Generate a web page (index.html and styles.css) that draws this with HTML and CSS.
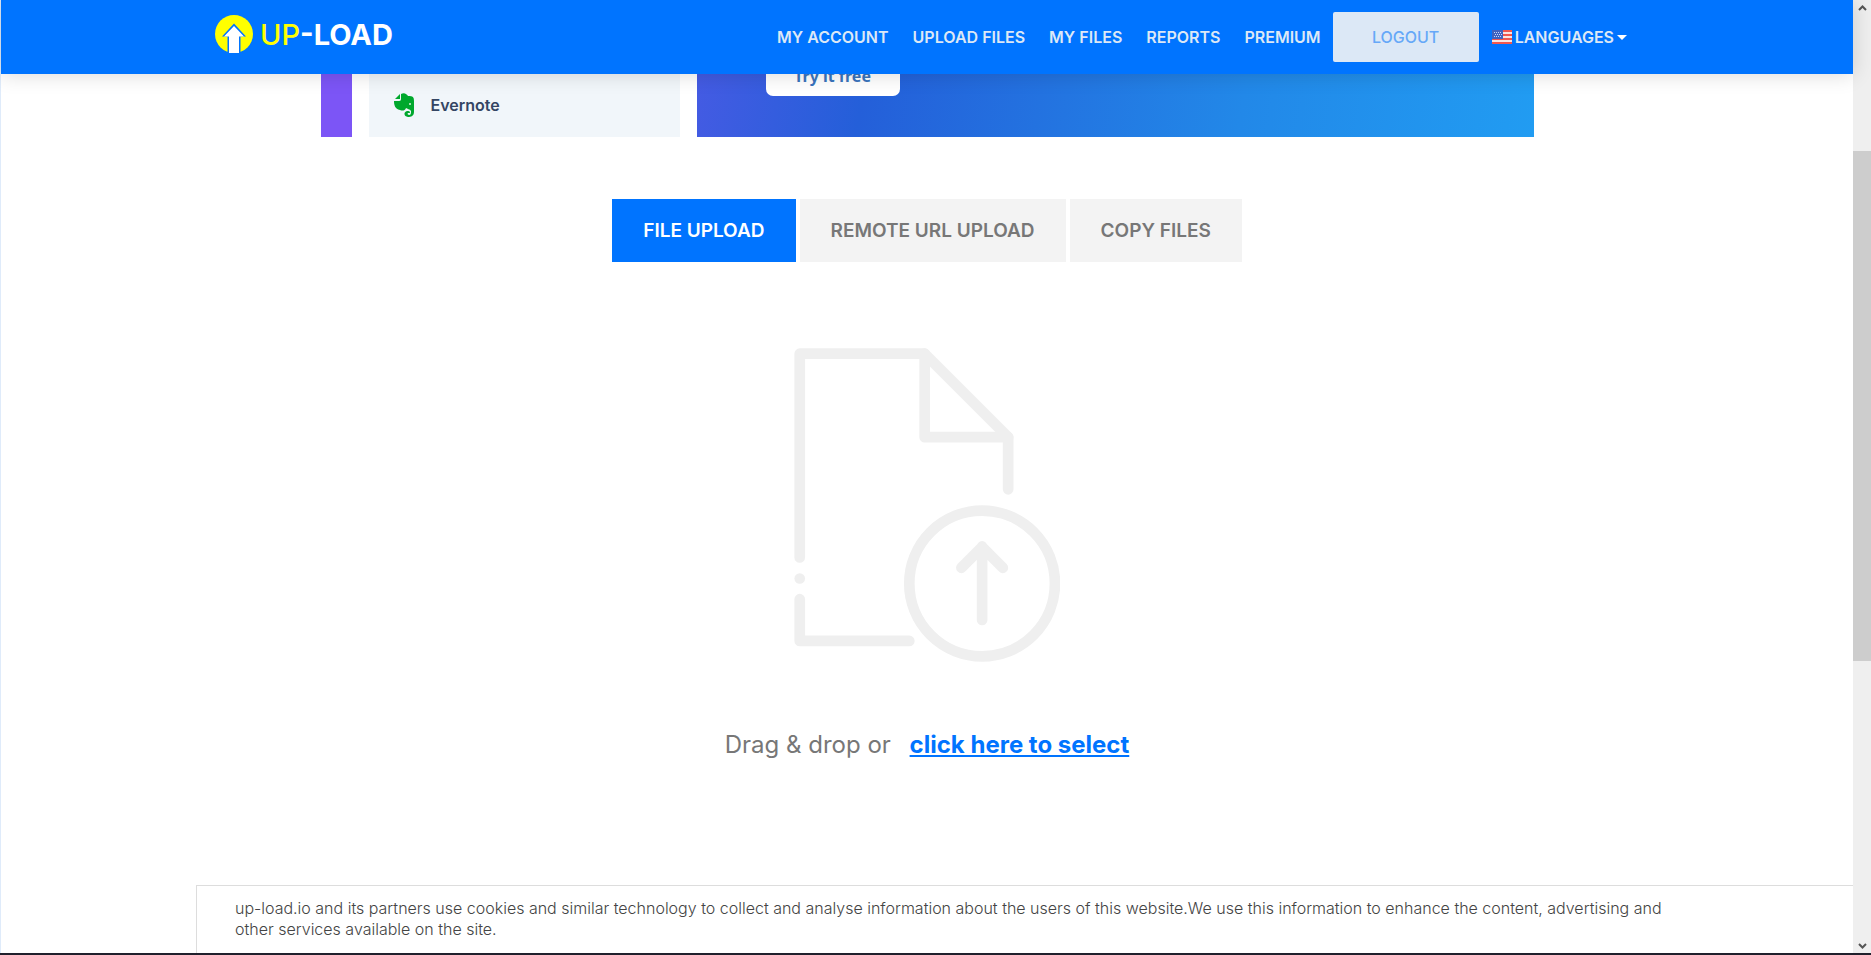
FILE: index.html
```html
<!DOCTYPE html>
<html lang="en">
<head>
  <meta charset="UTF-8" />
  <title>UP-LOAD</title>
  <link rel="stylesheet" href="styles.css">
</head>
<body>

  <div class="window">
    <div class="page">

      <header>
        <div class="container">
          <a href="#" class="logo">
            <svg width="38" height="38" viewBox="0 0 38 38">
              <circle cx="19" cy="19" r="19" fill="#ffff00" />
              <path d="M19 8.500 7 21.500h5.500V38h13V21.500H31z" fill="#0074ff" />
              <path d="M19 11 9 21.500H14v16.500h10V21.500h5z" fill="#fff" />
            </svg>
            <span><i>UP</i>-LOAD</span>
          </a>

          <nav>
            <a href="#">MY ACCOUNT</a>
            <a href="#">UPLOAD FILES</a>
            <a href="#">MY FILES</a>
            <a href="#">REPORTS</a>
            <a href="#">PREMIUM</a>
            <a href="#" class="logout">LOGOUT</a>
            <button type="button" class="languages">
              <svg width="20" height="14" viewBox="0 0 20 14">
                <rect width="20" height="14" fill="#f9e4e0" />
                <path d="M0 1h20M0 5h20M0 9h20M0 13h20" stroke="#f0574f" stroke-width="2" />
                <rect width="11" height="9" fill="#3f62bf" />
                <path d="M2 2.500h8M3 4.500h7M2 6.500h8" stroke="#c9d6f5" stroke-dasharray="1 1" />
              </svg>
              LANGUAGES
              <span class="caret"></span>
            </button>
          </nav>
        </div>
      </header>

      <main>
        <div class="banner">
          <div class="purple"></div>
          <div class="apps">
            <svg width="21" height="24" viewBox="0 0 21 24">
              <path d="M6 1v5H1zM7 1c3-2 6 0 7 2 5 0 6 1 6 5v11c0 4-3 5-6 5-4 0-5-5-1-6 2 0 3 0 3 2h-2c-1 1 0 2 1 2 2 0 2-2 2-4-1-2-4-2-5-3-1 3-4 3-6 2-5-1-6-5-6-9h5c2 0 2-1 2-3z" fill="#00a82d" />
              <circle cx="16" cy="11" r="1" fill="#d8f0de" />
            </svg>
            <span>Evernote</span>
          </div>
          <div class="offer">
            <a href="#">Try it free</a>
          </div>
        </div>

        <div class="tabs">
          <button type="button" class="active">FILE UPLOAD</button>
          <button type="button">REMOTE URL UPLOAD</button>
          <button type="button">COPY FILES</button>
        </div>

        <div class="drop">
          <svg width="266" height="314" viewBox="42 56 796 940">
            <g fill="none" stroke="#efefef" stroke-width="32" stroke-linecap="round" stroke-linejoin="round">
              <path d="M59 683V73H433L683 323V479" />
              <path d="M433 73V323H683" />
              <path d="M59 808V933H387" />
              <path d="M59 746h0" />
              <circle cx="605" cy="761" r="218" />
              <path d="M605 870V650M543 714l62-62 62 62" />
            </g>
          </svg>
          <p>Drag &amp; drop or <a href="#">click here to select</a></p>
        </div>
      </main>

      <div class="cookies">
        <p>up-load.io and its partners use cookies and similar technology to collect and analyse information about the users of this website.We use this information to enhance the content, advertising and other services available on the site.</p>
      </div>
    </div>

    <!-- scrollbar -->
    <div class="scrollbar">
      <svg width="18" height="18" viewBox="0 0 18 18"><path d="M6 10l3.500-3.500L13 10" /></svg>
      <div class="track"><div class="thumb"></div></div>
      <svg width="18" height="18" viewBox="0 0 18 18"><path d="M6 9l3.500 3.500L13 9" /></svg>
    </div>
  </div>

  <div class="taskbar"></div>

</body>
</html>
```
FILE: styles.css
```css
* { margin: 0; padding: 0; box-sizing: border-box; }

body {
  font-family: Inter, "Liberation Sans", sans-serif;
  background: white;
  color: #777;
  height: 100vh;
  display: flex;
  flex-direction: column;
  overflow: hidden;
}

button { font-family: inherit; border: none; cursor: pointer; }
a { text-decoration: none; }

.window { flex: 1; display: flex; min-height: 0; }

.page {
  flex: 1;
  display: flex;
  flex-direction: column;
  border-left: 1px solid #dfebfa;
}

/* header */
header {
  position: relative;
  z-index: 10;
  flex: none;
  height: 74px;
  background: #0074ff;
  box-shadow: 0 0 20px rgba(0, 0, 0, 0.16);
}

.container {
  max-width: 1440px;
  height: 100%;
  margin: 0 auto;
  padding: 0 20px 0 8px;
  display: flex;
  align-items: center;
  justify-content: space-between;
}

.logo {
  display: flex;
  align-items: center;
  gap: 7px;
  padding-bottom: 6px;
  color: white;
  font-size: 29px;
  font-weight: 700;
}

.logo i { color: #ffff00; font-style: normal; font-weight: 500; }

nav { display: flex; align-items: center; }

nav a {
  padding: 0 12px;
  color: #dce8f6;
  font-size: 16px;
  font-weight: 600;
}

nav .logout {
  width: 146px;
  line-height: 50px;
  text-align: center;
  background: #dce8f6;
  color: #66a8f8;
  font-weight: 500;
  border-radius: 2px;
}

.languages {
  display: flex;
  align-items: center;
  gap: 3px;
  padding-left: 13px;
  background: none;
  color: #dce8f6;
  font-size: 16px;
  font-weight: 600;
}

.caret {
  border: 5px solid transparent;
  border-top-color: white;
  border-bottom: 0;
}

main { flex: 1; }

/* ad banner */
.banner {
  display: flex;
  width: 1213px;
  max-width: 100%;
  height: 63px;
  margin: 0 auto;
}

.purple { width: 31px; background: #7c55f6; }

.apps {
  display: flex;
  align-items: center;
  gap: 16px;
  width: 311px;
  margin: 0 17px;
  padding: 0 0 2px 25px;
  background: #f1f6fa;
  color: #344563;
  font-size: 16px;
  font-weight: 600;
}

.offer {
  flex: 1;
  padding-left: 69px;
  background: linear-gradient(100deg, #445be3, #245fd9 20%, #2288e8 65%, #219cf2);
}

.offer a {
  display: block;
  width: 134px;
  height: 44px;
  margin-top: -22px;
  background: white;
  color: #3a74bd;
  font: 700 16px/48px "Noto Sans", sans-serif;
  text-align: center;
  border-radius: 7px;
}

/* upload tabs */
.tabs {
  display: flex;
  justify-content: center;
  gap: 4px;
  margin-top: 62px;
}

.tabs button {
  height: 63px;
  padding: 0 31px;
  background: #f3f3f3;
  color: #777;
  font-size: 19px;
  font-weight: 600;
}

.tabs .active { background: #0074ff; color: white; }

.drop {
  display: flex;
  flex-direction: column;
  align-items: center;
  padding-top: 86px;
}

.drop p {
  margin-top: 68px;
  font-size: 24px;
  line-height: 30px;
}

.drop a {
  margin-left: 12px;
  color: #0074ff;
  font-weight: 700;
  text-decoration: underline;
}

/* cookie notice */
.cookies {
  height: 68px;
  margin-left: 195px;
  padding: 12px 160px 0 38px;
  border-top: 1px solid #ddd;
  border-left: 1px solid #ddd;
  color: #444;
  font-size: 16px;
  font-weight: 300;
  line-height: 21px;
}

.scrollbar {
  width: 18px;
  display: flex;
  flex-direction: column;
  background: #efefef;
}

.scrollbar path { fill: none; stroke: #555; stroke-width: 2; }
.track { flex: 1; padding-top: 133px; }
.thumb { height: 65%; background: #cdcdcd; }

.taskbar { height: 2px; background: #20202c; }
```
